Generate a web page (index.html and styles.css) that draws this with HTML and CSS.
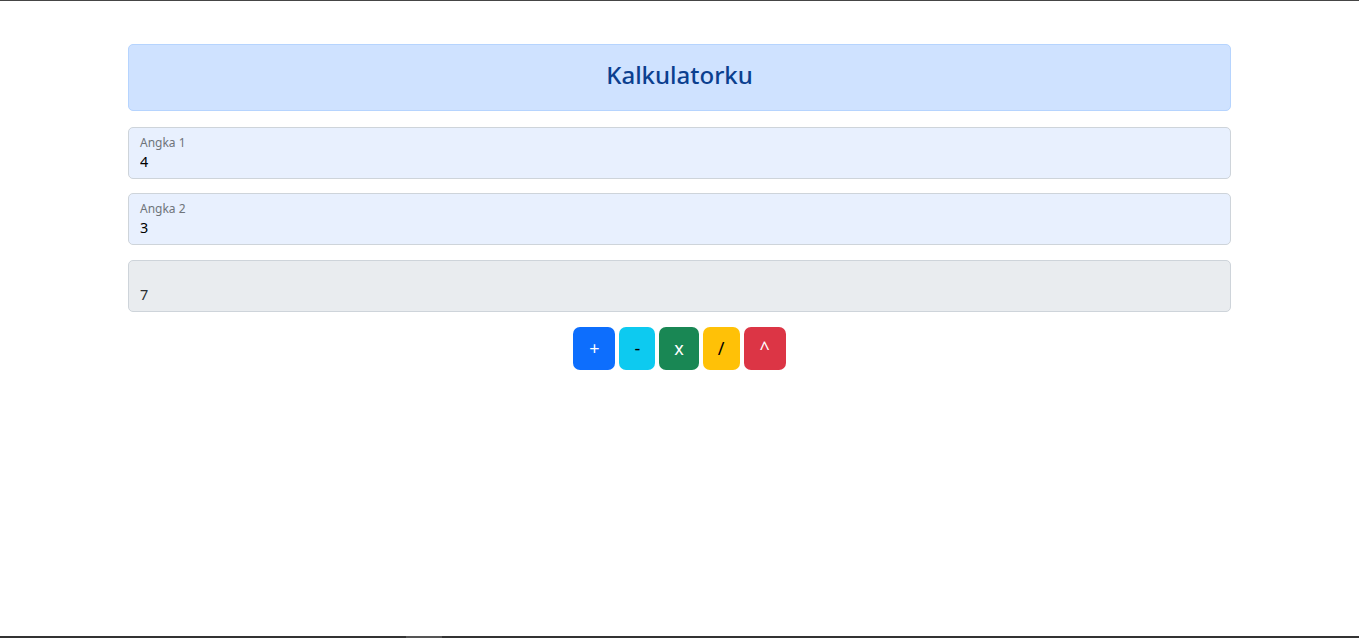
FILE: index.html
```html
<!DOCTYPE html>
<html lang="id">
<head>
<meta charset="utf-8">
<title>Kalkulatorku</title>
<link rel="stylesheet" href="styles.css">
</head>
<body>
<div class="page">
  <main class="container">
    <div class="alert">
      <h4 class="title">Kalkulatorku</h4>
    </div>
    <div class="field autofill gap-16">
      <label class="field-label" for="a1">Angka 1</label>
      <input class="field-input" id="a1" type="text" value="4">
    </div>
    <div class="field autofill gap-14">
      <label class="field-label" for="a2">Angka 2</label>
      <input class="field-input" id="a2" type="text" value="3">
    </div>
    <div class="field disabled gap-15">
      <label class="field-label" for="res"></label>
      <input class="field-input" id="res" type="text" value="7" disabled>
    </div>
    <div class="buttons gap-15">
      <button class="btn btn-primary">+</button>
      <button class="btn btn-info">-</button>
      <button class="btn btn-success">x</button>
      <button class="btn btn-warning">/</button>
      <button class="btn btn-danger">^</button>
    </div>
  </main>
  <div class="frame-bottom"><span class="frame-thumb"></span></div>
</div>
</body>
</html>
```
FILE: styles.css
```css
* { box-sizing: border-box; }
html, body { margin: 0; padding: 0; }
body {
  font-family: "Noto Sans", "Open Sans", "Liberation Sans", sans-serif;
  color: #212529;
  background: #ffffff;
}
.page {
  min-height: 100vh;
  display: flex;
  flex-direction: column;
  border-top: 1px solid #454545;
}
.container {
  padding: 43px 128px 0 128px;
  display: flex;
  flex-direction: column;
}
.alert {
  height: 67px;
  background: #cfe2ff;
  border: 1px solid #b6d4fe;
  border-radius: 5px;
  padding: 15px 14px 0 14px;
  text-align: center;
}
.title {
  margin: 0;
  font-size: 24px;
  line-height: 30px;
  font-weight: 500;
  color: #0b3f8f;
}
.field {
  height: 52px;
  border: 1px solid #ced4da;
  border-radius: 5px;
  padding: 7px 11px 0 11px;
  display: flex;
  flex-direction: column;
}
.autofill { background: #e8f0fe; }
.disabled { background: #e9ecef; }
.field-label {
  display: block;
  height: 16px;
  font-size: 12px;
  line-height: 16px;
  color: #6f747a;
}
.field-input {
  display: block;
  width: 100%;
  height: 22px;
  margin: 0;
  padding: 0;
  border: 0;
  outline: none;
  background: transparent;
  font-family: inherit;
  font-size: 14.4px;
  line-height: 22px;
  color: #000000;
}
.disabled .field-input { color: #2b2f33; }
.gap-16 { margin-top: 16px; }
.gap-14 { margin-top: 14px; }
.gap-15 { margin-top: 15px; }
.buttons {
  display: flex;
  justify-content: center;
  gap: 4px;
}
.btn {
  height: 43px;
  padding: 0 14px;
  border: 1px solid transparent;
  border-radius: 7px;
  font-family: inherit;
  font-size: 18px;
  line-height: 41px;
  cursor: pointer;
}
.btn-primary { background: #0d6efd; color: #ffffff; padding: 0 15px; }
.btn-info { background: #0dcaf0; color: #000000; }
.btn-success { background: #198754; color: #ffffff; }
.btn-warning { background: #ffc107; color: #000000; }
.btn-danger { background: #dc3545; color: #ffffff; padding: 0 15px; }
.frame-bottom {
  margin-top: auto;
  height: 2px;
  background: #333333;
  display: flex;
}
.frame-thumb {
  margin-left: 406px;
  width: 36px;
  background: #555555;
}
```
